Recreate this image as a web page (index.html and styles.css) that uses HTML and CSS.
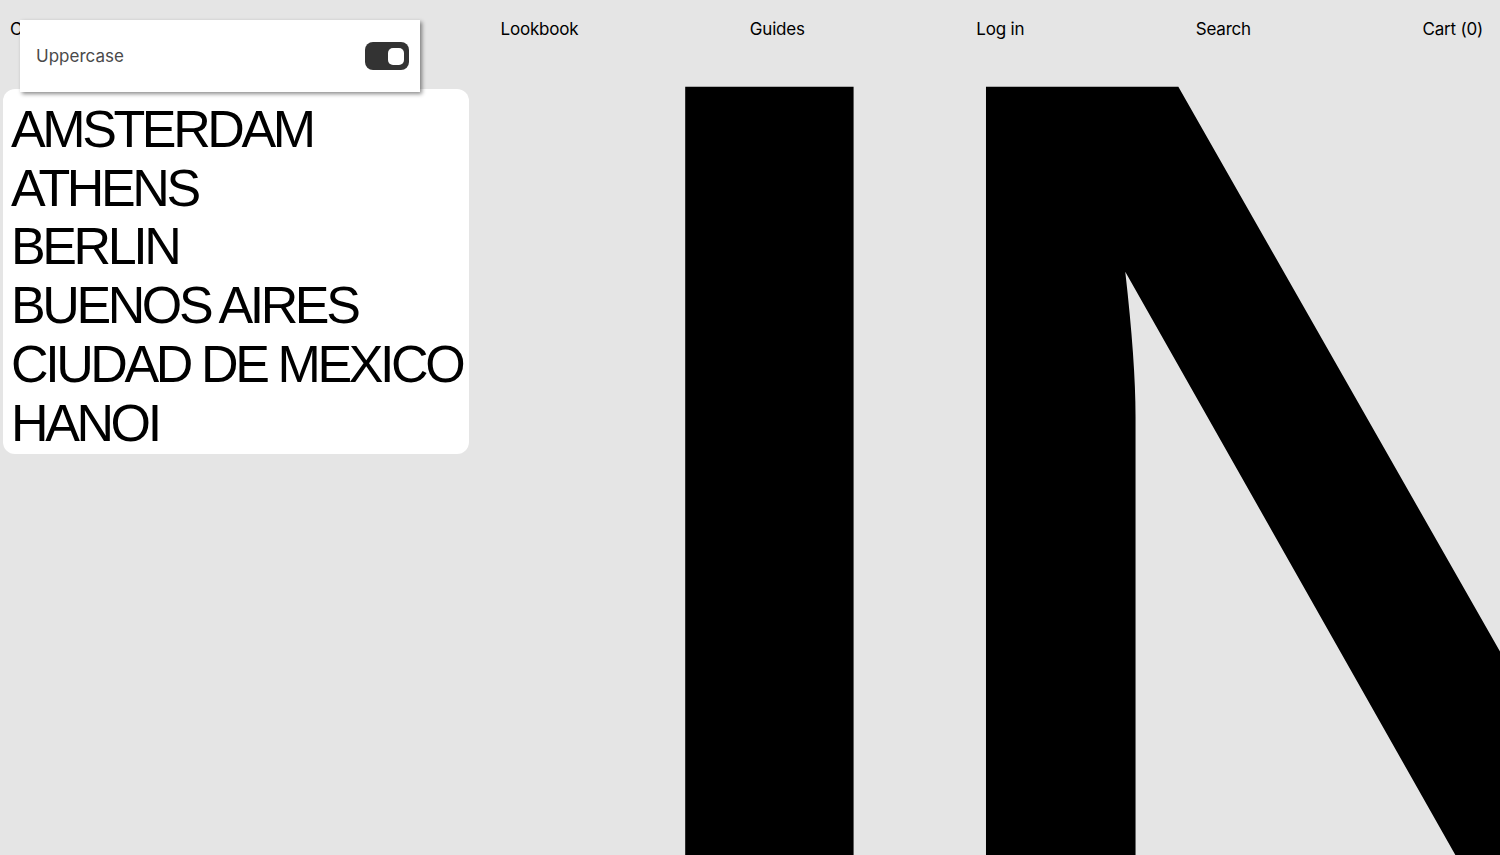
FILE: index.html
```html
<!DOCTYPE html>
<html lang="en">
<head>
  <meta charset="UTF-8" />
  <meta name="viewport" content="width=device-width, initial-scale=1.0"/>
  <title>Index — City Guides</title>
  <link rel="stylesheet" href="styles.css">
</head>
<body>

  <header class="topnav">
    <a class="nav-link nav-cities" href="#">Cities</a>
    <a class="nav-link" href="#">Lookbook</a>
    <a class="nav-link" href="#">Guides</a>
    <a class="nav-link" href="#">Log in</a>
    <a class="nav-link" href="#">Search</a>
    <a class="nav-link" href="#">Cart (0)</a>
  </header>

  <main class="hero">
    <div class="hero-word">INDEX</div>
  </main>

  <!-- city dropdown -->
  <ul class="city-menu">
    <li>Amsterdam</li>
    <li>Athens</li>
    <li>Berlin</li>
    <li>Buenos Aires</li>
    <li>Ciudad de Mexico</li>
    <li>Hanoi</li>
  </ul>

  <!-- text settings popup -->
  <div class="case-popup">
    <span class="case-label">Uppercase</span>
    <span class="toggle on"><span class="toggle-knob"></span></span>
  </div>

</body>
</html>
```

FILE: styles.css
```css
html, body {
  margin: 0;
  padding: 0;
}
body {
  background: #e5e5e5;
  color: #000;
  font-family: Inter, "Liberation Sans", Arial, sans-serif;
  width: 1500px;
  height: 855px;
  overflow: hidden;
  position: relative;
}
a {
  color: inherit;
  text-decoration: none;
}

.topnav {
  display: flex;
  justify-content: space-between;
  align-items: center;
  height: 58px;
  padding: 0 17px 0 10px;
  font-size: 17px;
  letter-spacing: -0.2px;
}
.nav-cities {
  width: 319px;
}

.hero {
  padding-left: 607px;
  white-space: nowrap;
  overflow: hidden;
}
.hero-word {
  font-family: "Liberation Sans", Arial, sans-serif;
  font-weight: bold;
  font-size: 1169px;
  line-height: 0.733;
  letter-spacing: -24px;
}

.city-menu {
  position: absolute;
  top: 89px;
  left: 3px;
  width: 448px;
  margin: 0;
  padding: 11px 10px 2px 8px;
  list-style: none;
  background: #fff;
  border-radius: 12px;
  font-family: "Liberation Sans", Arial, sans-serif;
  font-size: 52px;
  line-height: 58.7px;
  letter-spacing: -3.4px;
  text-transform: uppercase;
  white-space: nowrap;
}

.case-popup {
  position: absolute;
  top: 20px;
  left: 20px;
  width: 400px;
  height: 72px;
  box-sizing: border-box;
  padding: 0 11px 0 16px;
  display: flex;
  align-items: center;
  justify-content: space-between;
  background: #fff;
  box-shadow: 2px 2px 4px rgba(0, 0, 0, 0.45);
  z-index: 2;
}
.case-label {
  font-size: 17px;
  color: #4a4a4a;
}
.toggle {
  display: flex;
  align-items: center;
  justify-content: flex-end;
  width: 44px;
  height: 28px;
  box-sizing: border-box;
  padding: 0 5px;
  border-radius: 8px;
  background: #333;
}
.toggle-knob {
  width: 16px;
  height: 17px;
  border-radius: 5px;
  background: #fff;
}
```
